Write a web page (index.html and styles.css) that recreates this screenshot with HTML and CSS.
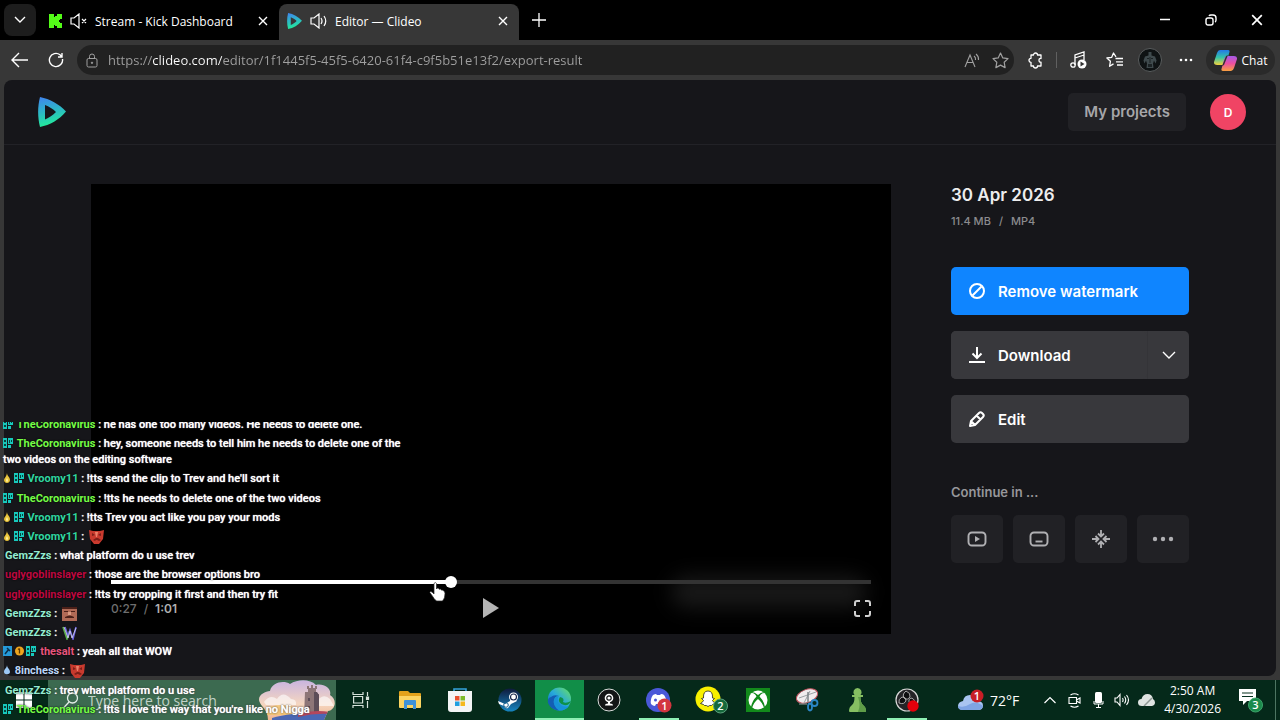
FILE: index.html
```html
<!DOCTYPE html>
<html lang="en">
  <head>
    <meta charset="UTF-8" />
    <meta name="viewport" content="width=device-width, initial-scale=1.0" />
    <title>Editor — Clideo</title>
    <link rel="stylesheet" href="styles.css">
  </head>
  <body>
    <!-- shared icons -->
    <svg class="defs" aria-hidden="true">
      <defs>
        <linearGradient id="brand" x1="0" y1="0" x2="0.2" y2="1">
          <stop offset="0" stop-color="#4182f0" />
          <stop offset="0.5" stop-color="#2db5c8" />
          <stop offset="1" stop-color="#22eb9a" />
        </linearGradient>
        <linearGradient id="edge" x1="0" y1="1" x2="1" y2="0">
          <stop offset="0" stop-color="#0f5fc0" />
          <stop offset="0.5" stop-color="#27a9dc" />
          <stop offset="1" stop-color="#6be25c" />
        </linearGradient>
        <linearGradient id="steam" x1="0" y1="0" x2="0" y2="1">
          <stop offset="0" stop-color="#0f1a3c" />
          <stop offset="1" stop-color="#1685c0" />
        </linearGradient>
        <linearGradient id="sky" x1="0" y1="0" x2="0" y2="1">
          <stop offset="0" stop-color="#c8b4e0" />
          <stop offset="0.6" stop-color="#f5d6c0" />
          <stop offset="1" stop-color="#f0b48c" />
        </linearGradient>
        <linearGradient id="chatA" x1="0" y1="0" x2="0" y2="1">
          <stop offset="0" stop-color="#2378e8" />
          <stop offset="0.5" stop-color="#35c4a8" />
          <stop offset="1" stop-color="#f4d33c" />
        </linearGradient>
        <linearGradient id="chatB" x1="0" y1="0" x2="0" y2="1">
          <stop offset="0" stop-color="#a45ae8" />
          <stop offset="0.5" stop-color="#ec4fa0" />
          <stop offset="1" stop-color="#f9a040" />
        </linearGradient>
      </defs>
      <symbol id="logo" viewBox="0 0 28 30">
        <path fill="url(#brand)" fill-rule="evenodd" d="M2 0C12 2 21 7 28 14.500C21 23 12 28 2 30C-0.500 20-0.500 10 2 0zM7 8v14.500c4-2 8-4.500 11-7.500C15 12 11 9.500 7 8z" />
      </symbol>
      <symbol id="cross" viewBox="0 0 10 10">
        <path d="M1 1l8 8M9 1L1 9" fill="none" stroke="currentColor" stroke-width="1.400" />
      </symbol>
      <symbol id="badge-mod" viewBox="0 0 10 10">
        <path fill="#18c9bd" d="M0 0h4v10H0zM5 0h5v6H5zM5 7h3v3H5z" />
        <path fill="#07443f" d="M1 2h2v2H1zM1 6h2v2H1zM6 2h1v3H6zM8 2h1v2H8z" />
      </symbol>
      <symbol id="badge-flame" viewBox="0 0 8 10">
        <path fill="#e8c33a" d="M4 0c0 3 3 4 3 7 0 4-6 4-6 0C1 5 4 3 4 0z" />
        <path fill="#fff3a0" d="M4 4c0 2 1 2 1 4 0 1-2 1-2 0 0-2 1-2 1-4z" />
      </symbol>
      <symbol id="emote-devil" viewBox="0 0 15 15">
        <path fill="#c93a2e" d="M0 1l4 1h7l4-1-1 9-4 5H5l-4-5z" />
        <path fill="#7d1e18" d="M3 4l3 2-3 1zM12 4L9 6l3 1zM4 11l3-2h2l3 2-2 1-2-1H7l-1 1z" />
        <path fill="#ec8068" d="M6 3h3l-1 5H7z" />
      </symbol>
    </svg>

    <!-- tab strip -->
    <header class="tab-strip">
      <button class="tab-actions" aria-label="Tab actions">
        <svg width="14" height="14" viewBox="0 0 14 14"><path d="M2 4l5 5 5-5" fill="none" stroke="currentColor" stroke-width="1.400" /></svg>
      </button>
      <div class="tab">
        <svg width="13" height="14" viewBox="0 0 13 14"><path fill="#53fc18" d="M0 0h5v3h1V2h2V0h5v5h-2v1h-1v2h1v1h2v5H8v-2H6v-1H5v3H0z" /></svg>
        <svg width="17" height="16" viewBox="0 0 17 16" fill="none" stroke="currentColor" stroke-width="1.200"><path d="M1 5h3l5-4v14l-5-4H1zM12 6l4 4M16 6l-4 4" /></svg>
        <span class="tab-title">Stream - Kick Dashboard</span>
        <button class="tab-close" aria-label="Close tab"><svg width="10" height="10"><use href="#cross" /></svg></button>
      </div>
      <div class="tab active">
        <svg width="15" height="16"><use href="#logo" /></svg>
        <svg width="17" height="16" viewBox="0 0 17 16" fill="none" stroke="currentColor" stroke-width="1.200"><path d="M1 5h3l5-4v14l-5-4H1zM11 5q2 3 0 6M14 3q3.500 5 0 10" /></svg>
        <span class="tab-title">Editor — Clideo</span>
        <button class="tab-close" aria-label="Close tab"><svg width="10" height="10"><use href="#cross" /></svg></button>
      </div>
      <button class="new-tab" aria-label="New tab">
        <svg width="16" height="16" viewBox="0 0 16 16"><path d="M8 1v14M1 8h14" stroke="currentColor" stroke-width="1.300" /></svg>
      </button>
      <div class="window-buttons">
        <button aria-label="Minimize"><svg width="12" height="12" viewBox="0 0 12 12"><path d="M1 5.500h10" stroke="currentColor" stroke-width="1.500" /></svg></button>
        <button aria-label="Restore"><svg width="12" height="12" viewBox="0 0 12 12" fill="none" stroke="currentColor" stroke-width="1.400"><rect x="1" y="4" width="7" height="7" rx="2" /><path d="M4 2q0.500-1 2-1h2q3 0 3 3v2q0 1.500-1 2" /></svg></button>
        <button aria-label="Close"><svg width="12" height="12"><use href="#cross" /></svg></button>
      </div>
    </header>

    <!-- address bar -->
    <nav class="toolbar">
      <button class="tool" aria-label="Back">
        <svg width="18" height="16" viewBox="0 0 18 16"><path d="M8 1L1 8l7 7M1 8h16" fill="none" stroke="currentColor" stroke-width="1.400" /></svg>
      </button>
      <button class="tool" aria-label="Refresh">
        <svg width="16" height="16" viewBox="0 0 16 16"><path d="M14.500 7A6.600 6.600 0 1 1 12 2.800L14 5M14 1v4h-4" fill="none" stroke="currentColor" stroke-width="1.400" /></svg>
      </button>
      <div class="address">
        <svg width="12" height="15" viewBox="0 0 12 15" fill="none" stroke="currentColor"><rect x="1" y="5.500" width="10" height="8.500" rx="1.500" /><path d="M3.500 5.500V3.500a2.500 2.500 0 0 1 5 0v2" /><circle cx="6" cy="9.800" r="0.700" fill="currentColor" /></svg>
        <input class="url" type="text" aria-label="Address" value="https://clideo.com/editor/1f1445f5-45f5-6420-61f4-c9f5b51e13f2/export-result" />
        <button aria-label="Read aloud"><svg width="16" height="15" viewBox="0 0 16 15" fill="none" stroke="currentColor" stroke-width="1.100"><path d="M1 14L6 2l5 12M3 9.500h6M10 3q2 1.500 1.500 4M12 1q3 2.500 2.500 6" /></svg></button>
        <button aria-label="Add to favorites"><svg width="17" height="17" viewBox="0 0 17 17"><path d="M8.500 1l2.300 4.900 5.200.7-3.800 3.700.9 5.300-4.600-2.500-4.600 2.500.9-5.300L1 6.600l5.200-.7z" fill="none" stroke="currentColor" stroke-width="1.200" stroke-linejoin="round" /></svg></button>
      </div>
      <button class="tool" aria-label="Extensions">
        <svg width="17" height="17" viewBox="0 0 17 17"><path d="M4 3h2.500a2 2 0 0 1 4 0H14v3.500q-2-.3-2 1.800t2 1.800V14h-3.500a2 2 0 0 1-4 0H4v-3.700a2 2 0 0 1 0-4z" fill="none" stroke="currentColor" stroke-width="1.300" stroke-linejoin="round" /></svg>
      </button>
      <span class="divider"></span>
      <button class="tool" aria-label="Media">
        <svg width="17" height="18" viewBox="0 0 17 18" fill="none" stroke="currentColor" stroke-width="1.300"><path d="M5 14V4l9-3v8M5 7l9-3" /><circle cx="3" cy="14" r="2.200" /><circle cx="12" cy="13" r="4.500" fill="currentColor" stroke="none" /><path fill="#333" stroke="none" d="M10.500 10.500v5l4-2.500z" /></svg>
      </button>
      <button class="tool" aria-label="Favorites">
        <svg width="17" height="16" viewBox="0 0 17 16" fill="none" stroke="currentColor" stroke-width="1.300" stroke-linejoin="round"><path d="M10 4.800L7.500 1 5.600 5.400.9 6l3.500 3.300-.8 5 3.900-2.400M9.500 6.500H17M10 9.800h7M11 13h6" /></svg>
      </button>
      <button class="tool" aria-label="Profile">
        <svg width="24" height="24" viewBox="0 0 24 24"><circle cx="12" cy="12" r="11.500" fill="#0f1314" stroke="#5b5e5f" /><path fill="#3f4a4d" d="M10.500 4h3v3.500l3.500 1 1.500 4-1 3-1.500-3-1 3 .5 4.500h-7l.5-4.500-1-3-1.500 3-1-3 1.500-4 3.500-1z" /><path fill="#1c2325" d="M11.500 9h1v6h-1zM9 10h2v1H9zM13 10h2v1h-2zM10 16h4v3h-4z" /></svg>
      </button>
      <button class="tool" aria-label="Settings and more">
        <svg width="14" height="4" viewBox="0 0 14 4" fill="currentColor"><circle cx="2" cy="2" r="1.300" /><circle cx="7" cy="2" r="1.300" /><circle cx="12" cy="2" r="1.300" /></svg>
      </button>
      <button class="copilot">
        <svg width="23" height="21" viewBox="0 0 23 21"><path fill="url(#chatA)" d="M6 0h8q2 0 1.500 2L12 13q-.6 2-2.600 2H3q-3.500 0-3-3L3 3q1-3 3-3z" /><path fill="url(#chatB)" d="M13 6h7q3.500 0 3 3l-3 9q-1 3-3 3H9q-2 0-1.500-2L10.500 8q.6-2 2.500-2z" /><path fill="#333" d="M12 6l2-1-4 10-2 1z" /></svg>
        Chat
      </button>
    </nav>

    <!-- page -->
    <div class="viewport">
      <div class="page">
        <header class="site-header">
          <a href="#" aria-label="Clideo"><svg width="28" height="30"><use href="#logo" /></svg></a>
          <a class="my-projects" href="#">My projects</a>
          <button class="account">D</button>
        </header>

        <main class="content">
          <section class="player">
            <span class="smudge"></span>
            <input class="seek" type="range" min="0" max="61" step="0.1" value="27.2" aria-label="Seek" />
            <div class="controls">
              <p class="time"><span>0:27</span> <span>/</span> <b>1:01</b></p>
              <button aria-label="Play"><svg width="18" height="22" viewBox="0 0 18 22"><path fill="#b4b4b4" d="M1 1l16 10L1 21z" /></svg></button>
              <button class="fullscreen" aria-label="Fullscreen"><svg width="17" height="17" viewBox="0 0 17 17"><path d="M1 6V3q0-2 2-2h3M11 1h3q2 0 2 2v3M16 11v3q0 2-2 2h-3M6 16H3q-2 0-2-2v-3" fill="none" stroke="#d0d0d0" stroke-width="2" /></svg></button>
            </div>
            <svg class="pointer" width="17" height="20" viewBox="0 0 17 20"><path fill="#fff" stroke="#222" stroke-width="0.700" d="M5 1.500q1.500-2 2.500 0V7l1-1q1.500 0 1.700 1.300 1.300-.8 2.200.7 1.700-.5 2.400 1.200 1.200 0 1.200 2.300 0 5-2.500 7.500H7.500Q5 17 3 13.500L.800 10.500Q1.500 8.800 3 10l2 2z" /></svg>
          </section>

          <aside class="side">
            <h1>30 Apr 2026</h1>
            <p class="meta">11.4 MB <span>/</span> MP4</p>
            <button class="action primary">
              <svg width="18" height="18" viewBox="0 0 18 18" fill="none" stroke="currentColor" stroke-width="2"><circle cx="9" cy="9" r="7" /><path d="M4.500 13.500l9-9" /></svg>
              Remove watermark
            </button>
            <div class="split">
              <button class="action">
                <svg width="18" height="18" viewBox="0 0 18 18" fill="none" stroke="currentColor" stroke-width="2"><path d="M9 1v11M4.500 7.500L9 12l4.500-4.500M1 16h16" /></svg>
                Download
              </button>
              <button class="more" aria-label="Download options">
                <svg width="14" height="8" viewBox="0 0 14 8"><path d="M1 1l6 6 6-6" fill="none" stroke="currentColor" stroke-width="1.400" /></svg>
              </button>
            </div>
            <button class="action">
              <svg width="18" height="18" viewBox="0 0 18 18" fill="none" stroke="currentColor" stroke-width="2" stroke-linejoin="round"><path d="M2 16l1-5 8-8q1.500-1.500 3 0l1 1q1.500 1.500 0 3L7 15zM8.500 5.500l4 4M3 11l4 4" /></svg>
              Edit
            </button>
            <h2>Continue in ...</h2>
            <div class="tools">
              <button aria-label="Video"><svg width="20" height="16" viewBox="0 0 20 16"><rect x="1.500" y="1.500" width="17" height="13" rx="3.500" fill="none" stroke="currentColor" stroke-width="1.900" /><path d="M8 5v6l5-3z" fill="currentColor" /></svg></button>
              <button aria-label="Subtitles"><svg width="20" height="16" viewBox="0 0 20 16" fill="none" stroke="currentColor" stroke-width="1.900"><rect x="1.500" y="1.500" width="17" height="13" rx="3.500" /><path d="M6.500 10.500h7" /></svg></button>
              <button aria-label="Compress"><svg width="18" height="18" viewBox="0 0 18 18" fill="none" stroke="currentColor" stroke-width="1.800"><path d="M9 0v6M6 3.500l3 3 3-3M9 18v-6M6 14.500l3-3 3 3M0 9h6M3.500 6l3 3-3 3M18 9h-6M14.500 6l-3 3 3 3" /></svg></button>
              <button aria-label="More tools"><svg width="22" height="6" viewBox="0 0 22 6" fill="currentColor"><circle cx="3" cy="3" r="2.200" /><circle cx="11" cy="3" r="2.200" /><circle cx="19" cy="3" r="2.200" /></svg></button>
            </div>
          </aside>
        </main>
      </div>
    </div>

    <!-- taskbar -->
    <footer class="taskbar">
      <button class="start" aria-label="Start"><svg width="16" height="16" viewBox="0 0 16 16"><path fill="#fff" d="M0 0h7.500v7.500H0zM8.500 0H16v7.500H8.500zM0 8.500h7.500V16H0zM8.500 8.500H16V16H8.500z" /></svg></button>
      <div class="search">
        <svg width="16" height="17" viewBox="0 0 16 17" fill="none" stroke="#e6efe9" stroke-width="1.300"><circle cx="9.500" cy="6" r="5" /><path d="M6 10l-5.500 6" /></svg>
        <input type="text" placeholder="Type here to search" aria-label="Search" />
        <svg width="78" height="40" viewBox="0 0 78 40">
          <clipPath id="blob"><path d="M4 26C-4 16 6 12 12 11 14 2 26 0 32 4 40-1 52-1 58 5 66 3 74 9 72 15 80 20 77 30 70 31L66 40H10Q10 32 4 26z" /></clipPath>
          <g clip-path="url(#blob)">
            <path fill="url(#sky)" d="M0 0h78v40H0z" />
            <path fill="#fff" opacity="0.600" d="M6 22q6-8 13-3 6-9 14 0 6 0 5 6H8zM60 20q6-7 12-1l4 7H60z" />
            <path fill="#f7c766" opacity="0.700" d="M4 30q16-8 32-3v8H4z" />
            <path fill="#8d7577" d="M47 12h3v-3h-1V6h2v2h2V5h2v3h2V6h2v3h-1v5h3v22H46z" />
            <path fill="#5d4d58" d="M56 12h3l2 3v20h-5zM50 18h2v3h-2zM50 26h2v3h-2z" />
            <path fill="#4a67b4" d="M14 38q20-6 60-5v7H14z" />
            <path fill="#b4475c" d="M40 34q16-5 32-2v2q-16-1-32 3z" />
          </g>
        </svg>
      </div>
      <nav class="apps">
        <button aria-label="Task view"><svg width="18" height="18" viewBox="0 0 18 18" fill="none" stroke="#d6e2da" stroke-width="1.200"><path d="M1 1v2.500h10V1M1 17v-2.500h10V17M1.600 5.500h9v6.500h-9zM15.500 1v4M15.500 10v7" /><path d="M14.500 6h2v2.500h-2z" fill="#d6e2da" /></svg></button>
        <button aria-label="File Explorer"><svg width="22" height="19" viewBox="0 0 22 19"><path fill="#e3a21b" d="M0 1q0-1 1-1h8l2 2h10q1 0 1 1v5H0z" /><path fill="#fcd462" d="M0 5h22v11q0 1-1 1H1q-1 0-1-1z" /><path fill="#3f92d8" d="M5 10q0-1 1-1h10q1 0 1 1v8h-3v-4H8v4H5z" /></svg></button>
        <button aria-label="Microsoft Store"><svg width="24" height="24" viewBox="0 0 24 24"><path d="M6 5V1h12v4" fill="none" stroke="#35a2dc" stroke-width="1.600" /><path fill="#f3f4f5" d="M0 3h24v18q0 3-3 3H3q-3 0-3-3z" /><path fill="#e8502f" d="M7 8h4.500v4.500H7z" /><path fill="#7cb928" d="M12.500 8H17v4.500h-4.500z" /><path fill="#1f9fe0" d="M7 13.500h4.500V18H7z" /><path fill="#f5b81c" d="M12.500 13.500H17V18h-4.500z" /></svg></button>
        <button aria-label="Steam"><svg width="24" height="24" viewBox="0 0 24 24"><circle cx="12" cy="12" r="11.500" fill="url(#steam)" /><path fill="#fff" d="M0 13l7 3 5-3 1-4 6 4-6 3-3 4q-3 1-4-2l-5-2z" /><circle cx="15.500" cy="9" r="4.500" fill="#fff" /><circle cx="15.500" cy="9" r="3" fill="none" stroke="#17274d" stroke-width="1.200" /><circle cx="8" cy="17" r="2.300" fill="none" stroke="#17618f" /></svg></button>
        <button class="current" aria-label="Microsoft Edge"><svg width="25" height="24" viewBox="0 0 25 24"><circle cx="12.500" cy="12" r="11.500" fill="url(#edge)" /><path fill="#135eb4" d="M4 10q-4 1-3 6 3 7 11 7.500-7-6-5-11Q8 9 12 9 7 7 4 10z" /><path fill="#1793d8" d="M8 11q-3 8 4 12.400 6 .6 10-4.400-8 2-11-4-1-4 1-6-3 0-4 2z" /><path fill="#0e9148" d="M13 10q5 1 3 5 3 2 8-1-2 5-7 4-6-2-5-6z" /></svg></button>
        <button aria-label="Webcam"><svg width="24" height="24" viewBox="0 0 24 24"><circle cx="12" cy="12" r="11" fill="#131516" stroke="#d8dcda" /><circle cx="12" cy="10" r="4.300" fill="#fff" /><circle cx="12" cy="10" r="2.200" fill="none" stroke="#131516" stroke-width="1.200" /><path fill="#fff" d="M11 14h2v1.500q3 0 3 2H8q0-2 3-2z" /></svg></button>
        <button class="open" aria-label="Discord"><svg width="26" height="26" viewBox="0 0 26 26"><circle cx="12" cy="13" r="12" fill="#4a58d8" /><path fill="#fff" d="M7 8q2-1 3-1l1 1h3l1-1q2 0 3 1 3 4 2 9-2 2-4 2l-1-2H10l-1 2q-2 0-4-2-1-5 2-9z" /><circle cx="9.500" cy="13" r="1.500" fill="#4a58d8" /><circle cx="18.500" cy="18.500" r="7" fill="#d3363f" /><text x="18.500" y="22.500" class="badge-text">1</text></svg></button>
        <button class="snap" aria-label="Snapchat"><svg width="34" height="28" viewBox="0 0 34 28"><circle cx="13" cy="13" r="12.500" fill="#f8f000" /><path fill="#fff" stroke="#222" stroke-width="0.800" d="M13 5q5 0 4.500 7l2 .5-2 2q1 2 3 3l-3 1-1 1q-2-.5-3.500 1-1.500-1.500-3.500-1l-1-1-3-1q2-1 3-3l-2-2 2-.5Q8 5 13 5z" /><circle cx="25.500" cy="20" r="7" fill="#16693c" stroke="#5da37e" /><text x="25.500" y="24" class="badge-text">2</text></svg></button>
        <button aria-label="Xbox"><svg width="24" height="24" viewBox="0 0 24 24"><path fill="#128a1b" d="M0 0h24v24H0z" /><circle cx="12" cy="12" r="9.500" fill="#fff" /><path fill="#128a1b" d="M5 4q4 0 7 3 3-3 7-3l-1 1q-3 0-4.500 3.500Q18 13 19 19l-1 1q-2-6-6-9-4 3-6 9l-1-1q1-6 5.500-10.500Q9 5 6 5z" /></svg></button>
        <button aria-label="Snipping Tool"><svg width="24" height="24" viewBox="0 0 24 24"><ellipse cx="11" cy="8" rx="11" ry="6.500" transform="rotate(-20 11 8)" fill="#f0ecee" stroke="#c25560" /><path d="M3 10l17-6M8 15l6-12M3 16h8" stroke="#9aa0a4" fill="none" /><path d="M12 4v10" stroke="#7e8488" stroke-width="1.500" /><circle cx="18.500" cy="15" r="3" fill="none" stroke="#2b86c6" stroke-width="1.800" /><ellipse cx="14" cy="19" rx="2" ry="3.500" fill="none" stroke="#2b86c6" stroke-width="1.800" /></svg></button>
        <button aria-label="Chess"><svg width="17" height="24" viewBox="0 0 17 24"><path fill="#86bf62" d="M8.500 0a4.200 4.200 0 0 1 3 7H14v2h-2.500q0 6 2.500 8 3 2 3 6 0 1-1 1H1q-1 0-1-1 0-4 3-6 2.500-2 2.500-8H3V7h2.500a4.200 4.200 0 0 1 3-7z" /><path fill="#5f9c48" d="M9 9h2.500q0 6 2.500 8 3 2 3 6 0 1-1 1H9q3-7 0-15z" /></svg></button>
        <button class="open" aria-label="OBS Studio"><svg width="24" height="24" viewBox="0 0 24 24"><circle cx="12" cy="12" r="11" fill="#242427" stroke="#d8d8d8" stroke-width="1.200" /><path fill="#0e0e10" stroke="#b8b8b8" stroke-width="0.900" d="M11 3q-5 4-1 8 3 1 5-2 1-4-4-6zM4 15q6 2 7-3 0-3-4-3-4 2-3 6zM19 17q2-6-3-7-3 1-2 4 1 3 5 3z" /><circle cx="18" cy="18" r="5.700" fill="#e3000b" /></svg></button>
      </nav>
      <div class="tray">
        <button class="weather">
          <svg width="26" height="23" viewBox="0 0 26 23"><path fill="#a9c4f0" d="M5 21q-5 0-5-4t5-5q1-6 7-6t7 6q6 0 6 4.500T20 21z" /><path fill="#7fa4e4" d="M0 17q6 2 12-2t13 2q-1 4-5 4H5q-5 0-5-4z" /><circle cx="19" cy="7" r="6.500" fill="#c81e26" /><text x="19" y="11" class="badge-text">1</text></svg>
          72°F
        </button>
        <div class="tray-icons">
          <button aria-label="Show hidden icons"><svg width="12" height="8" viewBox="0 0 12 8"><path d="M0.500 7L6 1.500 11.500 7" fill="none" stroke="#fff" stroke-width="1.200" /></svg></button>
          <button aria-label="Meet now"><svg width="13" height="17" viewBox="0 0 13 17" fill="none" stroke="#fff" stroke-width="1.100"><path d="M2.500 3q4-2.500 8 0M2.500 14q4 2.500 8 0M1 5.500h7.500v6H1zM8.500 8l3.500-2v5L8.500 9" /></svg></button>
          <button aria-label="Microphone"><svg width="11" height="16" viewBox="0 0 11 16"><rect x="2" y="0" width="7" height="11" rx="1.500" fill="#fff" /><path d="M1 9v3h9V9M5.500 12v4M3 15.500h5" stroke="#fff" fill="none" /></svg></button>
          <button aria-label="Volume"><svg width="16" height="14" viewBox="0 0 16 14" fill="none" stroke="#fff" stroke-width="1.100"><path d="M1 5h2l3-3.500v11L3 9H1zM8.500 5q1.200 2 0 4M10.500 3.500q2.500 3.500 0 7M12.500 2q4 5 0 10" /></svg></button>
          <button aria-label="OneDrive"><svg width="17" height="12" viewBox="0 0 17 12"><path fill="#dfe3e1" d="M4 12q-4 0-4-3.500T3.500 5Q5 0 9.500 0T15 5q2 1 2 3.500T14 12z" /><path d="M6 12l8-8" stroke="#8d9692" stroke-width="1.500" /></svg></button>
        </div>
        <time class="clock">2:50 AM<br />4/30/2026</time>
        <button class="notices" aria-label="Notifications"><svg width="26" height="25" viewBox="0 0 26 25"><path fill="#fff" d="M0 1h17v12H8l-4 4v-4H0z" /><path d="M3 5h11M3 8.500h11" stroke="#06301f" /><circle cx="16.500" cy="17" r="7" fill="#1b8a4b" stroke="#3da56c" /><text x="16.500" y="21" class="badge-text">3</text></svg></button>
        <button class="peek" aria-label="Show desktop"></button>
      </div>
    </footer>

    <!-- stream chat overlay -->
    <section class="chat">
      <ul>
        <li><svg width="10" height="10"><use href="#badge-mod" /></svg> <b class="lime">TheCoronavirus</b> : he has one too many videos. He needs to delete one.</li>
        <li><svg width="10" height="10"><use href="#badge-mod" /></svg> <b class="lime">TheCoronavirus</b> : hey, someone needs to tell him he needs to delete one of the two videos on the editing software</li>
        <li><svg width="8" height="10"><use href="#badge-flame" /></svg> <svg width="10" height="10"><use href="#badge-mod" /></svg> <b class="teal">Vroomy11</b> : !tts send the clip to Trev and he'll sort it</li>
        <li><svg width="10" height="10"><use href="#badge-mod" /></svg> <b class="lime">TheCoronavirus</b> : !tts he needs to delete one of the two videos</li>
        <li><svg width="8" height="10"><use href="#badge-flame" /></svg> <svg width="10" height="10"><use href="#badge-mod" /></svg> <b class="teal">Vroomy11</b> : !tts Trev you act like you pay your mods</li>
        <li><svg width="8" height="10"><use href="#badge-flame" /></svg> <svg width="10" height="10"><use href="#badge-mod" /></svg> <b class="teal">Vroomy11</b> : <svg class="emote" width="15" height="15"><use href="#emote-devil" /></svg></li>
        <li class="plain"><b class="mint">GemzZzs</b> : what platform do u use trev</li>
        <li class="plain"><b class="crimson">uglygoblinslayer</b> : those are the browser options bro</li>
        <li class="plain"><b class="crimson">uglygoblinslayer</b> : !tts try cropping it first and then try fit</li>
        <li class="plain"><b class="mint">GemzZzs</b> : <svg class="emote" width="15" height="14" viewBox="0 0 15 14"><path fill="#b06a56" d="M0 0h15v14H0z" /><path fill="#4b2019" d="M0 0h15v2H0zM2 4h4v1H2zM9 4h4v1H9zM3 10q5-3 9 0v1H3z" /><path fill="#d89a82" d="M6 5h3v3H6z" /></svg></li>
        <li class="plain"><b class="mint">GemzZzs</b> : <svg class="emote" width="15" height="14" viewBox="0 0 15 14" fill="none" stroke-width="1.600"><path stroke="#5ab04a" d="M1 1l4 12 3-9" /><path stroke="#6a62e0" d="M3 1l3 9 2-6 3 9 3-12" /><path stroke="#d8d8ec" stroke-width="0.800" d="M2 1l4 11 2-7 2 7 4-10" /></svg></li>
        <li><svg width="9" height="10" viewBox="0 0 9 10"><path fill="#2599d8" d="M0 0h9v10H0z" /><path d="M2 8l4-5M4 2l3 3" stroke="#0a2e48" stroke-width="1.500" /></svg> <svg width="9" height="10" viewBox="0 0 9 10"><circle cx="4.500" cy="5" r="4.500" fill="#efa51e" /><path d="M4.500 2.500v5M3 3.500l1.500-1" stroke="#5c3804" stroke-width="1.300" /></svg> <svg width="10" height="10"><use href="#badge-mod" /></svg> <b class="rose">thesalt</b> : yeah all that WOW</li>
        <li><svg width="8" height="10" viewBox="0 0 8 10"><path fill="#9cc8f4" d="M4 0c0 3 3 4 3 7 0 3-6 3-6 0 0-3 3-4 3-7z" /></svg> <b class="ice">8inchess</b> : <svg class="emote" width="15" height="15"><use href="#emote-devil" /></svg></li>
        <li class="plain"><b class="mint">GemzZzs</b> : trev what platform do u use</li>
        <li><svg width="10" height="10"><use href="#badge-mod" /></svg> <b class="lime">TheCoronavirus</b> : !tts I love the way that you're like no Nigga</li>
      </ul>
    </section>
  </body>
</html>
```

FILE: styles.css
```css
/* base */
* {
  box-sizing: border-box;
}

body {
  margin: 0;
  min-height: 100vh;
  display: flex;
  flex-direction: column;
  position: relative;
  background-color: #000;
  color: #fff;
  font-family: "Segoe UI", "Open Sans", sans-serif;
  font-size: 12px;
}

button {
  display: flex;
  align-items: center;
  justify-content: center;
  padding: 0;
  border: none;
  background: none;
  color: inherit;
  font: inherit;
  cursor: pointer;
}

h1,
h2,
p,
ul {
  margin: 0;
  padding: 0;
}

svg {
  flex-shrink: 0;
}

.defs {
  position: absolute;
  width: 0;
  height: 0;
}

/* tab strip */
.tab-strip {
  display: flex;
  height: 40px;
  padding: 4px 0 0 4px;
}

.tab-actions {
  width: 32px;
  height: 32px;
  margin-right: 3px;
  border-radius: 8px;
  background-color: #1d1d1d;
}

.tab {
  display: flex;
  align-items: center;
  gap: 8px;
  width: 240px;
  padding: 0 10px 2px;
}

.tab.active {
  padding-left: 8px;
  background-color: #373737;
  border-radius: 8px 8px 0 0;
}

.tab-title {
  flex: 1;
  white-space: nowrap;
}

.tab-close {
  width: 12px;
  height: 20px;
}

.new-tab {
  width: 40px;
  height: 32px;
}

.window-buttons {
  display: flex;
  height: 32px;
  margin-left: auto;
}

.window-buttons button {
  width: 46px;
}

/* toolbar */
.toolbar {
  display: flex;
  align-items: center;
  height: 40px;
  padding: 0 5px 0 2px;
  background-color: #373737;
}

.tool {
  width: 36px;
  height: 30px;
}

.address {
  flex: 1;
  display: flex;
  align-items: center;
  gap: 10px;
  height: 30px;
  margin: 0 3px;
  padding: 0 5px 0 9px;
  border-radius: 15px;
  background-color: #212121;
  color: #a0a0a0;
}

.address button {
  width: 18px;
}

/* the domain part of the address is brighter than the rest */
.url {
  flex: 1;
  min-width: 0;
  padding: 0;
  border: none;
  outline: none;
  font: 13px "Segoe UI", "Open Sans", sans-serif;
  color: transparent;
  background: linear-gradient(90deg, #a0a0a0 44px, #fff 44px, #fff 114px, #a0a0a0 114px);
  -webkit-background-clip: text;
  background-clip: text;
}

.divider {
  width: 1px;
  height: 16px;
  margin: 0 3px;
  background-color: #606060;
}

.copilot {
  gap: 5px;
  width: 69px;
  height: 30px;
  margin-left: 2px;
  border-radius: 15px;
  background-color: #2a2a2a;
}

/* page */
.viewport {
  flex: 1;
  display: flex;
  padding: 0 4px 4px;
  background-color: #373737;
}

.page {
  flex: 1;
  border-radius: 8px;
  background-color: #16161a;
  font-family: Inter, sans-serif;
}

.site-header {
  display: flex;
  align-items: center;
  height: 65px;
  padding: 0 30px 0 34px;
  border-bottom: 1px solid #222227;
}

.site-header a {
  display: flex;
}

.site-header .my-projects {
  margin: 0 24px 0 auto;
  padding: 9px 16px;
  border-radius: 5px;
  background-color: #212125;
  color: #a6a6a9;
  font-size: 15px;
  font-weight: 600;
  line-height: 20px;
  text-decoration: none;
}

.account {
  width: 36px;
  height: 36px;
  border-radius: 50%;
  background-color: #f04464;
  font-size: 12px;
  font-weight: 600;
}

.content {
  display: flex;
  gap: 60px;
  max-width: 1098px;
  margin: 0 auto;
  padding: 39px 0;
}

/* player */
.player {
  position: relative;
  flex: 1;
  display: flex;
  flex-direction: column;
  justify-content: flex-end;
  gap: 7px;
  aspect-ratio: 16 / 9;
  padding: 0 20px 13px;
  background-color: #000;
}

.seek {
  appearance: none;
  position: relative;
  width: 100%;
  height: 12px;
  margin: 0;
  background: linear-gradient(90deg, #fff 45%, #333 45%) center / 100% 4px no-repeat;
}

.seek::-webkit-slider-thumb {
  appearance: none;
  width: 12px;
  height: 12px;
  border-radius: 50%;
  background-color: #fff;
}

.controls {
  position: relative;
  display: grid;
  grid-template-columns: 1fr auto 1fr;
  align-items: center;
  height: 26px;
}

.time {
  display: flex;
  gap: 7px;
  color: #6e6e6e;
  font-size: 12px;
  font-weight: 500;
}

.time b {
  color: #b0b0b0;
  font-weight: 600;
}

.fullscreen {
  justify-self: end;
}

.smudge {
  position: absolute;
  right: 24px;
  bottom: 26px;
  width: 196px;
  height: 32px;
  border-radius: 16px;
  background-color: #181818;
  filter: blur(10px);
}

.pointer {
  position: absolute;
  left: 338px;
  bottom: 32px;
}

/* side panel */
.side {
  width: 238px;
}

.side h1 {
  color: #ededee;
  font-size: 17px;
  font-weight: 600;
  line-height: 22px;
}

.meta {
  display: flex;
  gap: 8px;
  margin: 7px 0 38px;
  color: #8b8b8e;
  font-size: 11px;
  font-weight: 500;
  line-height: 16px;
}

.action {
  justify-content: flex-start;
  gap: 12px;
  width: 100%;
  height: 48px;
  padding: 0 17px;
  border-radius: 5px;
  background-color: #38383c;
  font-size: 15px;
  font-weight: 600;
}

.action.primary {
  background-color: #0f85ff;
}

.split {
  display: flex;
  margin: 16px 0;
  border-radius: 5px;
  background-color: #38383c;
}

.more {
  width: 42px;
  flex-shrink: 0;
  border-left: 1px solid #343438;
}

.side h2 {
  margin: 39px 0 13px;
  color: #97979a;
  font-size: 13px;
  font-weight: 600;
  line-height: 20px;
}

.tools {
  display: grid;
  grid-template-columns: repeat(4, 1fr);
  gap: 10px;
}

.tools button {
  height: 48px;
  border-radius: 5px;
  background-color: #212125;
  color: #b0b0b3;
}

/* taskbar */
.taskbar {
  display: flex;
  height: 40px;
  background-color: #05291a;
}

.start {
  width: 48px;
}

.search {
  display: flex;
  align-items: center;
  gap: 9px;
  width: 288px;
  padding-left: 15px;
  background-color: #3c6a50;
}

.search input {
  flex: 1;
  min-width: 0;
  padding: 0;
  border: none;
  background: none;
  font: 14px "Segoe UI", "Open Sans", sans-serif;
}

.search input::placeholder {
  color: #c2d2c8;
}

.apps {
  flex: 1;
  display: grid;
  grid-template-columns: repeat(12, 1fr);
}

.apps .current {
  background-color: #118e48;
  border-bottom: 2px solid #8ff0b4;
}

.apps .open {
  background: linear-gradient(#8ff0b4, #8ff0b4) bottom / 40px 2px no-repeat;
}

.apps .snap {
  padding-left: 8px;
}

.badge-text {
  fill: #fff;
  font: 600 11px "Open Sans", sans-serif;
  text-anchor: middle;
}

.tray {
  display: flex;
  align-items: center;
  width: 348px;
  padding-left: 26px;
}

.weather {
  gap: 6px;
  font-size: 14px;
}

.tray-icons {
  display: flex;
  margin-left: auto;
}

.tray-icons button {
  width: 24px;
}

.clock {
  margin: 0 18px 0 6px;
  line-height: 18px;
  text-align: center;
}

.peek {
  width: 5px;
  height: 100%;
  margin-left: 10px;
  border-left: 1px solid #4d7562;
}

/* chat overlay */
.chat {
  position: absolute;
  left: 0;
  top: 422px;
  bottom: 0;
  display: flex;
  width: 410px;
  overflow: hidden;
  pointer-events: none;
  font: 500 11px/16px Roboto, sans-serif;
  text-shadow: 0 0 1px #fff, 0 0 2px #000;
}

.chat ul {
  display: flex;
  flex-direction: column;
  justify-content: space-between;
  margin: -5px 0 2px;
  padding-left: 3px;
  list-style: none;
}

.chat b {
  margin-left: 1px;
  font-weight: 700;
  text-shadow: 0 0 2px #000;
}

.chat svg {
  vertical-align: -1px;
}

.chat .emote {
  margin: -4px 0 -4px 2px;
  vertical-align: 0;
}

.chat .plain {
  padding-left: 1px;
}

.lime {
  color: #75fd46;
}

.teal {
  color: #31d6a0;
}

.mint {
  color: #93ebd0;
}

.crimson {
  color: #bc0840;
}

.rose {
  color: #e9557e;
}

.ice {
  color: #bcd6fa;
}
```
